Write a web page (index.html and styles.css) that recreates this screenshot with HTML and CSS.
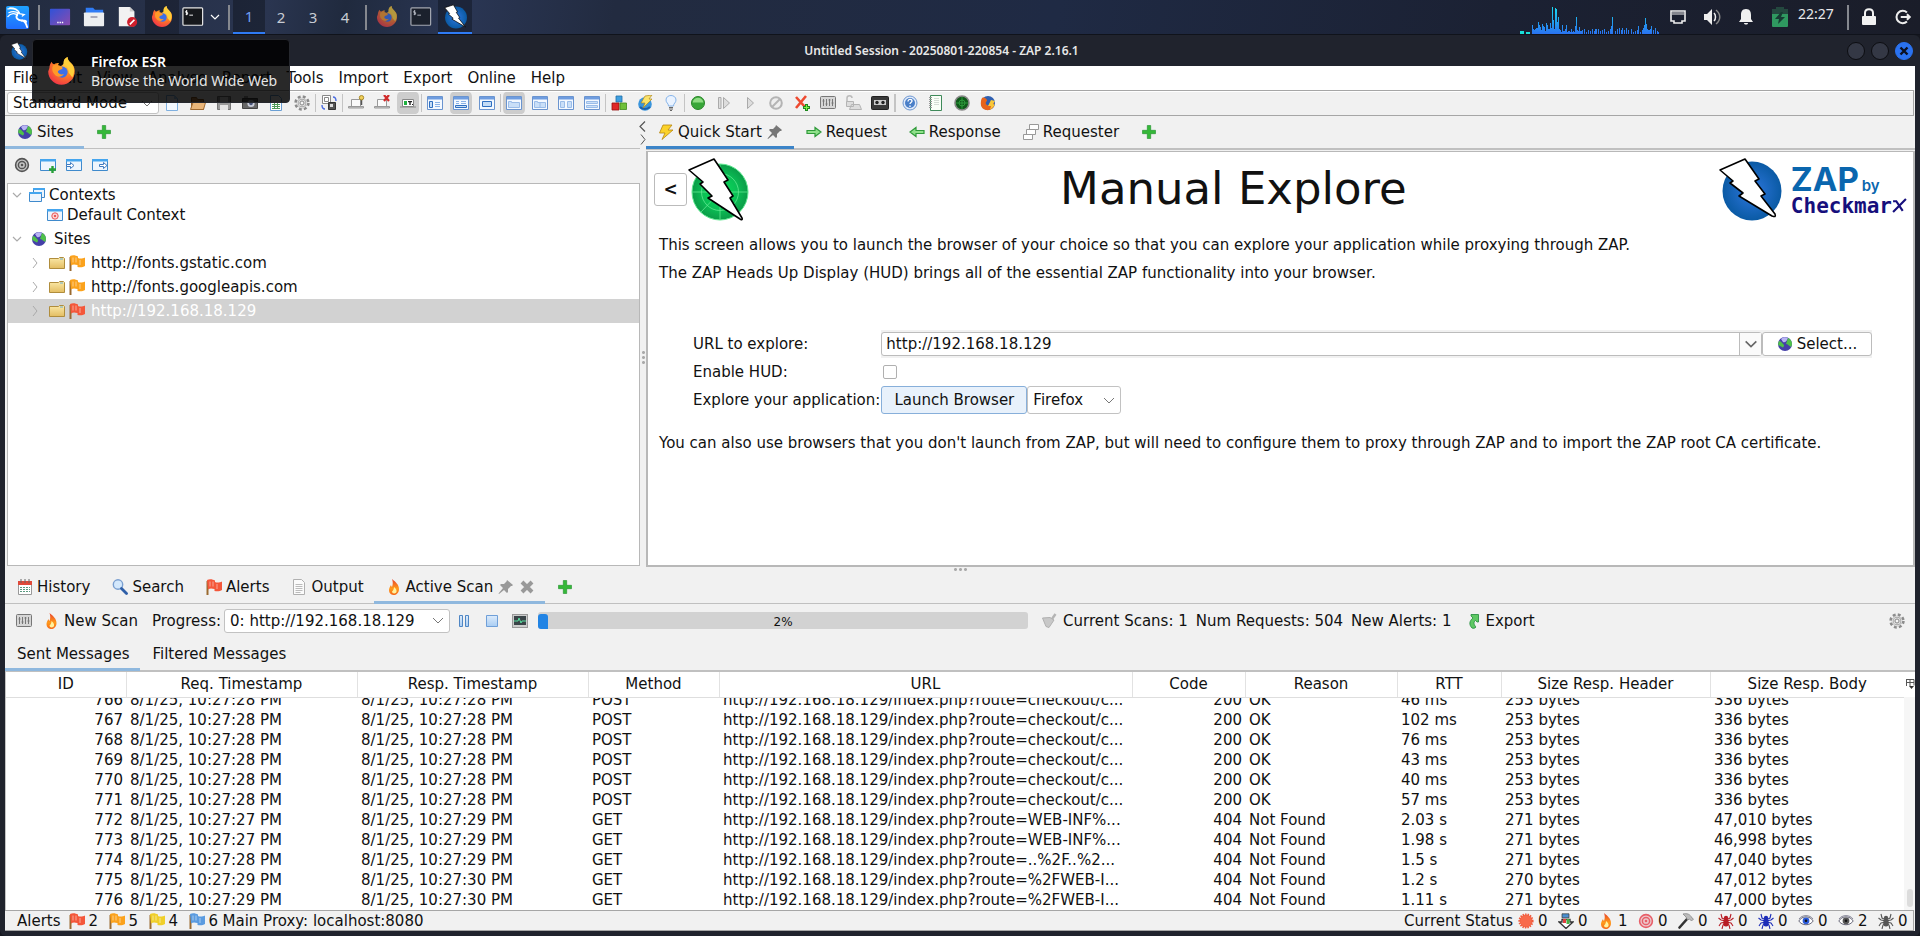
FILE: index.html
```html
<!DOCTYPE html>
<html lang="en">
<head>
<meta charset="utf-8">
<title>Untitled Session - 20250801-220854 - ZAP 2.16.1</title>
<link rel="stylesheet" href="styles.css">
</head>
<body>
<svg class="defs" aria-hidden="true">
  <defs>
    <radialGradient id="g-fox" cx="70%" cy="20%" r="90%"><stop offset="0" stop-color="#ffe14a"/><stop offset=".45" stop-color="#ff8a1f"/><stop offset="1" stop-color="#f0304a"/></radialGradient>
    <radialGradient id="g-blue"><stop offset="0" stop-color="#2f78e0"/><stop offset="1" stop-color="#0a5aa4"/></radialGradient>
    <radialGradient id="g-green"><stop offset="0" stop-color="#0ae05a"/><stop offset=".6" stop-color="#0ac055"/><stop offset="1" stop-color="#0b9c48"/></radialGradient>
    <linearGradient id="g-folder" x2="0" y2="1"><stop offset="0" stop-color="#fbe9a8"/><stop offset="1" stop-color="#e3bd62"/></linearGradient>
    <linearGradient id="g-flame" x2="0" y2="1"><stop offset="0" stop-color="#e8402a"/><stop offset=".6" stop-color="#ff9a1a"/><stop offset="1" stop-color="#f56a1c"/></linearGradient>
    <linearGradient id="g-desk" x2="1" y2="1"><stop offset="0" stop-color="#2f52d8"/><stop offset="1" stop-color="#8a4cae"/></linearGradient>
    <linearGradient id="g-lite" x2="0" y2="1"><stop offset="0" stop-color="#dcebfb"/><stop offset="1" stop-color="#a9cdf3"/></linearGradient>
    <linearGradient id="g-kali" x2="0" y2="1"><stop offset="0" stop-color="#1fa2ff"/><stop offset="1" stop-color="#1f6dff"/></linearGradient>
    <linearGradient id="g-graph" x1="0" y1="0" x2="0" y2="28" gradientUnits="userSpaceOnUse"><stop offset="0" stop-color="#18dcf0"/><stop offset="1" stop-color="#2a72f0"/></linearGradient>
  </defs>
  <symbol id="firefox" viewBox="0 0 24 24"><path fill="url(#g-fox)" d="M2 9c0-2 1-4 2-5 0 1 1 2 2 2 1-1 3-1 4-1-1 1-1 2 0 3 3-1 4-2 4-4 0-2 1-3 3-4 0 2 1 3 3 5 2 2 3 4 3 7 0 6-5 11-11 11S1 18 1 12z"/><path fill="#ffcf3a" d="M17 0c-2 1-4 3-3 6 2 1 4 3 4 7l3 4c3-6 1-10-2-12-1-1-2-3-2-5z"/><circle cx="12.500" cy="12.500" r="4.600" fill="#3d6fe8"/><path fill="#ff9a28" d="M5 7c3-1 7 0 8 2-1 2-3 1-4 3 0 2 3 3 5 2-2 3-6 3-8 0-2-2-2-5-1-7z"/></symbol>
  <symbol id="zap" viewBox="0 0 24 24"><circle cx="12.500" cy="13" r="10.500" fill="url(#g-blue)"/><path fill="#fff" stroke="#000" stroke-width=".7" stroke-linejoin="round" d="M1.500 3.500 10 .8l4 6.800-1.300.4 3.400 5-1.200.5 6.600 8.500L8.500 14.500l1.300-.8-4.600-4 1.100-.6z"/></symbol>
  <symbol id="term" viewBox="0 0 24 22"><rect x="1" y="1" width="21.500" height="19" rx="1" fill="#16181c" stroke="#e8e8e8" stroke-width="1.300"/><path d="M5.800 4.500H4.200v1.700h1.900v1.800H4M5 3.500v5.500M8 9h4" fill="none" stroke="#fff"/></symbol>
  <symbol id="kali" viewBox="0 0 26 26"><rect x="1" y="1" width="24" height="24" rx="2" fill="url(#g-kali)"/><path fill="none" stroke="#fff" stroke-width="1.300" stroke-linecap="round" d="M3 4c6-1 11 1 12 5M5 3c4 0 8 1 10 5M4 8c4-2 8-1 11 1l5 1-2 1.500M3 12c3-4 8-4 10-1"/><path fill="none" stroke="#fff" stroke-width="2" stroke-linecap="round" d="M13 9c-3 5 1 7 5 7 3 1 4 3 5 7M17 16.500c3-.5 5 0 5 1"/></symbol>
  <symbol id="files" viewBox="0 0 24 22"><path fill="#2f7bf5" d="M3 1h8l2 2h9v6H3z"/><rect x="1" y="6" width="22" height="15" rx="1" fill="#eceef0"/><rect x="8" y="10" width="8" height="2" rx="1" fill="#aab"/></symbol>
  <symbol id="editor" viewBox="0 0 22 24"><path fill="#f2f2f2" d="M1 1h12l5 5v16H1z"/><path fill="#c9c9c9" d="M13 1l5 5h-5z"/><circle cx="15.500" cy="17.500" r="5.500" fill="#cf1f2c"/><path d="m13 20 5-5" stroke="#fff" stroke-width="1.800"/></symbol>
  <symbol id="desk" viewBox="0 0 24 20"><rect x="1" y="1" width="22" height="18" rx="1" fill="url(#g-desk)"/><path d="M9 16h1.500M11.500 16H13M14 16h1.500" stroke="#fff" stroke-width="1.500"/></symbol>
  <symbol id="chev" viewBox="0 0 12 12"><path d="m2 4 4 4 4-4" fill="none" stroke="currentColor" stroke-width="1.200"/></symbol>
  <symbol id="chevr" viewBox="0 0 12 12"><path d="m4 1 4 5-4 5" fill="none" stroke="currentColor"/></symbol>
  <symbol id="chevl" viewBox="0 0 12 12"><path d="M8 1 3 6l5 5" fill="none" stroke="currentColor" stroke-width="1.200"/></symbol>
  <symbol id="net" viewBox="0 0 18 16"><path fill="none" stroke="#eee" stroke-width="1.600" d="M2 2h14v10h-3v2H5v-2H2z"/><path stroke="#eee" d="M4 3v3M6 3v3M8 3v3M10 3v3M12 3v3M14 3v3"/></symbol>
  <symbol id="vol" viewBox="0 0 18 18"><path fill="#eee" d="M1 6h3l5-5v16l-5-5H1z"/><path d="M11 5c2 2 2 6 0 8" fill="none" stroke="#eee" stroke-width="1.500"/><path d="M13 2c5 4 5 10 0 14" fill="none" stroke="#888" stroke-width="1.500"/></symbol>
  <symbol id="bell" viewBox="0 0 16 18"><path fill="#f0f0f0" d="M8 1c4 0 5 3 5 6v4l2 3H1l2-3V7c0-3 1-6 5-6zM6 15h4c0 2-4 2-4 0z"/></symbol>
  <symbol id="batt" viewBox="0 0 18 22"><path fill="#24483f" d="M5 1h8v2h4v6H1V3h4z"/><path fill="#2f9960" d="M1 8h16v12q0 1-1 1H2q-1 0-1-1z"/><path fill="#173b33" d="m10 6-6 7h4l-1 5 7-7h-4l2-5z"/></symbol>
  <symbol id="lock" viewBox="0 0 16 18"><path d="M4 8V5c0-5 8-5 8 0v3" fill="none" stroke="#f2f2f2" stroke-width="2"/><rect x="1" y="8" width="14" height="9" rx="1" fill="#f2f2f2"/></symbol>
  <symbol id="out" viewBox="0 0 16 16"><path d="M11.500 4a5.500 5.500 0 1 0 0 8M6 8h8M11.500 5.500 14 8l-2.500 2.500" fill="none" stroke="#eee" stroke-width="1.800"/></symbol>

  <symbol id="new" viewBox="0 0 16 16"><path fill="#f4f9ff" stroke="#7fb0e0" d="M2.500.5h8l3 3v12h-11z"/><path fill="#a9cdf3" d="M10 0v4h4z"/></symbol>
  <symbol id="open" viewBox="0 0 16 16"><path fill="#c98b4a" stroke="#8f5a24" d="M1.500 14.500v-12h5l1 2h6v10z"/><path fill="#eab679" stroke="#a06a30" d="M.5 14.500 3 7.500h12.500l-2 7z"/></symbol>
  <symbol id="save" viewBox="0 0 16 16"><path fill="#9a9a9a" stroke="#777" d="M1.500 1.500h13v13h-13z"/><path fill="#e4e4e4" d="M4 2h8v5H4zM4 10h8v5H4z"/></symbol>
  <symbol id="camera" viewBox="0 0 16 16"><path fill="#666" stroke="#444" d="M.5 3.500h15v10H.5z"/><circle cx="9" cy="8.500" r="3.600" fill="#c8ccd8"/><circle cx="9" cy="8.500" r="1.800" fill="#4a5578"/><path fill="#999" d="M2 1h4v2H2z"/></symbol>
  <symbol id="sheet" viewBox="0 0 16 16"><path fill="#fff" stroke="#6a9fd4" d="M2.500.5h8l3 3v12h-11z"/><path stroke="#4f9a5a" d="M4 7.500h8M4 9.500h8M4 11.500h8M4 13.500h8M6.500 7v7M9.500 7v7"/></symbol>
  <symbol id="gear" viewBox="0 0 16 16"><circle cx="8" cy="8" r="6.300" fill="none" stroke="#8c8c8c" stroke-width="2.800" stroke-dasharray="2.800 2.150"/><circle cx="8" cy="8" r="4.400" fill="#dedede" stroke="#8c8c8c" stroke-width="1.600"/><circle cx="8" cy="8" r="4.600" fill="none" stroke="#d8d8d8" stroke-width="1.200"/><circle cx="8" cy="8" r="2" fill="#f6f6f6" stroke="#888"/></symbol>
  <symbol id="swap" viewBox="0 0 16 16"><path fill="#fff" stroke="#888" d="M1.500.5h8v8h-8zM3.500 2.500h4v4h-4z"/><path fill="#555" stroke="#333" d="M7.500 7.500h7v7h-7z"/><path fill="#ddd" d="M9 9h3v3H9z"/><path d="M15 6c0-3-1-4-3-4M1 10c0 3 1 4 3 4" fill="none" stroke="#4a6ce0" stroke-width="1.400"/></symbol>
  <symbol id="lap" viewBox="0 0 16 16"><path fill="#fafafa" stroke="#999" d="M3.500 4.500h9v7h-9z"/><path fill="#ccc" stroke="#999" d="M.5 11.500h15v1.500H.5z"/></symbol>
  <symbol id="lapkey" viewBox="0 0 16 16"><use href="#lap"/><path d="M13.500 4v6" stroke="#555" stroke-width="1.500"/><circle cx="13.500" cy="2.700" r="2.200" fill="#f0cf5a" stroke="#a88a2a"/></symbol>
  <symbol id="lapx" viewBox="0 0 16 16"><use href="#lap"/><path d="m10 0 5 6m0-6-5 6" stroke="#d02a2a" stroke-width="2.200"/></symbol>
  <symbol id="lapt" viewBox="0 0 18 16"><path fill="#fff" stroke="#888" d="M3.500 4.500h11v7h-11z"/><path stroke="#888" d="M1 12h16"/><path fill="#20b040" d="M5 6h3v4H5z"/><path fill="#222" d="M9 6h4v1.200h-1.300V10h-1.400V7.200H9zM13 9h1v1h-1z"/></symbol>
  <symbol id="w0" viewBox="0 0 16 16"><path fill="#f4f9ff" stroke="#6a94cf" d="M.5 1.500h15v13H.5z"/><path fill="#6f9de0" d="M1 2h14v2.500H1z"/></symbol>
  <symbol id="w1" viewBox="0 0 16 16"><use href="#w0"/><path fill="#c4dcf6" stroke="#2f6fc0" d="M2.500 6.500h3v6h-3z"/><path d="M8 7.500h5M8 9.500h5M8 11.500h5" stroke="#8ab2e6"/></symbol>
  <symbol id="w2" viewBox="0 0 16 16"><use href="#w0"/><path d="M3 6.500h3M8 6.500h5M3 8.500h3M8 8.500h5" stroke="#8ab2e6"/><path fill="#c4dcf6" stroke="#2f6fc0" d="M2.500 10.500h11v2h-11z"/></symbol>
  <symbol id="w3" viewBox="0 0 16 16"><use href="#w0"/><path fill="#c4dcf6" stroke="#2f6fc0" d="M3.500 6.500h9v5h-9z"/></symbol>
  <symbol id="w4" viewBox="0 0 16 16"><use href="#w0"/><path fill="#c9dff8" stroke="#9abce8" d="M2.500 6.500h3v1h8v5h-11z"/></symbol>
  <symbol id="w5" viewBox="0 0 16 16"><use href="#w0"/><path fill="#c9dff8" stroke="#9abce8" d="M2.500 6.500h3v1h8v5h-11zM8 7.500v5"/></symbol>
  <symbol id="w6" viewBox="0 0 16 16"><use href="#w0"/><path fill="#c9dff8" stroke="#9abce8" d="M2.500 6.500h4v6h-4zM9.500 6.500h4v6h-4z"/></symbol>
  <symbol id="w7" viewBox="0 0 16 16"><use href="#w0"/><path fill="#c9dff8" stroke="#9abce8" d="M2.500 6.500h11v2h-11zM2.500 10.500h11v2h-11z"/></symbol>
  <symbol id="blocks" viewBox="0 0 16 16"><path fill="#3f9fe0" stroke="#1f6fa8" stroke-width=".8" d="M5 1h6v6H5z"/><path fill="#e02828" stroke="#981010" stroke-width=".8" d="M1 8h7v7H1z"/><path fill="#6fc03a" stroke="#3f8a1a" stroke-width=".8" d="M9 8h6.500v6.500H9z"/></symbol>
  <symbol id="update" viewBox="0 0 16 16"><circle cx="8" cy="9" r="6.800" fill="#3a95dc"/><path d="M3 12c2 2 6 3 10 0" stroke="#1f5fa8" stroke-width="2" fill="none"/><path fill="#fbe36a" stroke="#b08a20" stroke-width=".7" d="m8 1 7-1-3 4h3L6 13l2-5H4z"/></symbol>
  <symbol id="bulb" viewBox="0 0 16 16"><path fill="#eaf3ff" stroke="#86b4ea" d="M5.500 11c0-3-2.500-3-2.500-6 0-6 10-6 10 0 0 3-2.500 3-2.500 6z"/><path stroke="#666" d="M6 12.500h4M6 14h4M7 15.500h2"/></symbol>
  <symbol id="go" viewBox="0 0 16 16"><circle cx="8" cy="8" r="6.500" fill="#38a638" stroke="#2a862a"/><path fill="#8fdc84" d="M2.500 7.500C3.500 1 12.500 1 13.500 7.500z"/></symbol>
  <symbol id="step" viewBox="0 0 16 16"><path fill="#ddd" stroke="#aaa" d="M2.500 2.500h2.500v11H2.500zM7.500 2.500l6 5.500-6 5.500z"/></symbol>
  <symbol id="play" viewBox="0 0 16 16"><path fill="#ddd" stroke="#aaa" d="m5.500 2.500 6 5.500-6 5.500z"/></symbol>
  <symbol id="ban" viewBox="0 0 16 16"><circle cx="8" cy="8" r="5.800" fill="#eee" stroke="#b4b4b4" stroke-width="2"/><path d="m4 12 8-8" stroke="#b4b4b4" stroke-width="2"/></symbol>
  <symbol id="brk" viewBox="0 0 16 16"><path d="m2 2 9 10M12 1 2 13" stroke="#ee4a30" stroke-width="2.600"/><path d="M12.500 9v7M9 12.500h7" stroke="#1f8a1f" stroke-width="3"/><path d="M12.500 10v5M10 12.500h5" stroke="#7ff04a"/></symbol>
  <symbol id="mixer" viewBox="0 0 18 16"><rect x="1.500" y="1.500" width="15" height="12" rx="1" fill="#d6d6d6" stroke="#777"/><path d="M4.500 4v7M7.500 4v7M10.500 4v7M13.500 4v7M3.500 6h2M6.500 9h2M9.500 5h2M12.500 8h2" stroke="#777"/></symbol>
  <symbol id="unlock" viewBox="0 0 18 16"><path d="M2 7V3c0-3 5-3 5 0" fill="none" stroke="#bbb" stroke-width="1.500"/><path fill="#ddd" stroke="#b4b4b4" d="M1.500 6.500h7v5h-7zM6.500 9.500h8l2 5h-12z"/></symbol>
  <symbol id="tape" viewBox="0 0 18 16"><rect x=".5" y="1.500" width="17" height="13" rx="1" fill="#3a3a3a" stroke="#222"/><rect x="3" y="5" width="12" height="5" fill="#ccc"/><circle cx="6" cy="7.500" r="1.700" fill="#222"/><circle cx="12" cy="7.500" r="1.700" fill="#222"/></symbol>
  <symbol id="help" viewBox="0 0 16 16"><circle cx="8" cy="8" r="7" fill="#dfeafa" stroke="#6f97d0"/><circle cx="8" cy="8" r="5" fill="#4a7fc8"/><path d="M6 6.500c0-3 4-2.500 4-.5C10 7.500 8 7.500 8 9M8 10.500V12" fill="none" stroke="#fff" stroke-width="1.300"/></symbol>
  <symbol id="book" viewBox="0 0 16 16"><path fill="#fafff8" stroke="#3f8a5a" d="M2.500.5h11v15h-11z"/><path d="M1 2.500h3M1 4.500h3M1 6.500h3M1 8.500h3M1 10.500h3M1 12.500h3" stroke="#999"/><path d="M6 3.500h5M6 5.500h5M6 7.500h5M6 9.500h5" stroke="#d4dcd4"/></symbol>
  <symbol id="radar" viewBox="0 0 16 16"><circle cx="8" cy="8" r="7" fill="#0f5a1a" stroke="#888" stroke-width="1.600"/><circle cx="8" cy="8" r="3" fill="none" stroke="#38b048" stroke-width=".7"/><path d="M8 2v12M2 8h12" stroke="#38b048" stroke-width=".7"/></symbol>
  <symbol id="fox16" viewBox="0 0 16 16"><circle cx="8" cy="8" r="7" fill="#2f5fb0"/><path fill="#e8641c" d="M2 3c2-1 4 0 5 2 0 2-2 2-1 4 2 3 6 1 7-2 4 5-3 9-7 8C0 14 0 7 2 3z"/><path fill="#f8c83a" d="m11 5 4 1-2 3 2 1-5 5 1-4H8z"/></symbol>

  <symbol id="globe" viewBox="0 0 16 16"><circle cx="8" cy="8" r="7" fill="#4540a8"/><path fill="#b8b4f4" d="M4 3c2-2 5-2 7-1-1 3-3 5-5 4z"/><path fill="#4fc04a" d="M11 2c4 2 5 6 3 9-2-1-3-3-5-3zM2 5c2 0 3 2 5 4 0 2-1 3-2 2C3 10 1 9 1 8z"/></symbol>
  <symbol id="plus" viewBox="0 0 16 16"><path fill="#35b838" stroke="#1f8f2a" stroke-width=".6" d="M6.300 1.500h3.400v4.800h4.800v3.400H9.700v4.800H6.300V9.700H1.500V6.300h4.800z"/></symbol>
  <symbol id="bolt" viewBox="0 0 16 16"><path fill="#fbd22a" stroke="#b8860f" stroke-width=".8" d="M5 1h9l-4 5h5L4 15.500 7 9H1.500z"/></symbol>
  <symbol id="pin" viewBox="0 0 16 16"><path fill="currentColor" d="m9 1 6 5-1 1-1 0-3 3v3l-1 1-3-3-5 4-.5-.5L5 9 2 6l1-1h3l2.500-2.500z"/></symbol>
  <symbol id="arr" viewBox="0 0 16 16"><path fill="#8fe08a" stroke="#2f9a3a" stroke-width="1.200" d="M1 6.500h8V3.500L15 8l-6 4.500v-3H1z"/></symbol>
  <symbol id="arl" viewBox="0 0 16 16"><path fill="#8fe08a" stroke="#2f9a3a" stroke-width="1.200" d="M15 6.500H7V3.500L1 8l6 4.500v-3h8z"/></symbol>
  <symbol id="wins" viewBox="0 0 16 16"><g fill="#fff" stroke="#999"><path d="M6.500.5h9v5h-9z"/><path d="M3.500 5.500h9v5h-9z"/><path d="M.5 10.500h9v5h-9z"/></g></symbol>
  <symbol id="target" viewBox="0 0 16 16"><circle cx="8" cy="8" r="6.400" fill="#eee" stroke="currentColor" stroke-width="1.600"/><circle cx="8" cy="8" r="6.400" fill="currentColor" fill-opacity=".25"/><circle cx="8" cy="8" r="3.600" fill="none" stroke="currentColor" stroke-width="1.500"/><circle cx="8" cy="8" r="1.300" fill="currentColor"/></symbol>
  <symbol id="ctx" viewBox="0 0 16 16"><path fill="#eef5fd" stroke="#3f8acc" d="M.5 2.500h15v11H.5z"/><path fill="#45a5ee" d="M0 2h16v2.500H0z"/></symbol>
  <symbol id="ctxadd" viewBox="0 0 16 16"><use href="#ctx"/><path d="M12.500 9v7M9 12.500h7" stroke="#28a038" stroke-width="2.400"/></symbol>
  <symbol id="ctxin" viewBox="0 0 16 16"><use href="#ctx"/><path fill="#fff" stroke="#3f7ac0" d="M.5 7.500h4v-2L8 8.500l-3.500 3v-2h-4z"/></symbol>
  <symbol id="ctxout" viewBox="0 0 16 16"><use href="#ctx"/><path fill="#fff" stroke="#3f7ac0" d="M7.500 7.500h4v-2L15 8.500l-3.500 3v-2h-4z"/></symbol>
  <symbol id="ctxs" viewBox="0 0 16 16"><path fill="#eef5fd" stroke="#3f8acc" d="M4.500 1.500h11v9h-11z"/><path fill="#45a5ee" d="M4 1h12v2H4z"/><path fill="#eef5fd" stroke="#3f8acc" d="M.5 5.500h12v9H.5z"/><path fill="#45a5ee" d="M0 5h13v2H0z"/></symbol>
  <symbol id="ctxt" viewBox="0 0 16 16"><use href="#ctx"/><circle cx="8" cy="9" r="3.200" fill="#fbd0d0" stroke="#e85a5a"/><circle cx="8" cy="9" r="1" fill="#e03030"/></symbol>
  <symbol id="folder" viewBox="0 0 16 16"><path fill="url(#g-folder)" stroke="#b08d3c" d="M.5 3.500h9l1-1h4l1 1v10H.5z"/><path d="M11 4h3" stroke="#6ab0d8"/></symbol>
  <symbol id="flag" viewBox="0 0 16 16"><path d="M1.500 2v14" stroke="#9a6a30" stroke-width="2"/><path fill="currentColor" d="M1 1c3-1.500 6-.5 8 .5V3c2 1 5 .5 7-.5v8.500c-2 1.500-5 1.500-7.500 1L8.500 10C6 9.500 4 9 2 10.500z"/><path d="M4 2.500v5M7 2.500v5M11 5v5" stroke="#fff" stroke-opacity=".35" stroke-width="1.400"/></symbol>
  <symbol id="cal" viewBox="0 0 16 16"><path fill="#fff" stroke="#999" d="M1.500 3.500h13v12h-13z"/><path fill="#e04a3a" d="M1 2h14v4H1z"/><path d="M4 0v4M8 0v4M12 0v4" stroke="#666"/><path d="M3 8.500h10M3 10.500h10M3 12.500h10" stroke="#5a9a80" stroke-dasharray="2 1"/></symbol>
  <symbol id="mag" viewBox="0 0 16 16"><circle cx="6" cy="5.500" r="4.700" fill="#d3e8fc" stroke="#7a9fd0" stroke-width="1.400"/><path d="m9.500 9.500 5 5" stroke="#2f5fa8" stroke-width="2.800" stroke-linecap="round"/></symbol>
  <symbol id="page" viewBox="0 0 16 16"><path fill="#fbfbfb" stroke="#b0b0b0" d="M2.500.5h8l3 3v12h-11z"/><path d="M4.500 5.500h7M4.500 7.500h7M4.500 9.500h7M4.500 11.500h7M4.500 13.500h5" stroke="#bbb"/></symbol>
  <symbol id="flame" viewBox="0 0 12 16"><path fill="url(#g-flame)" d="M4 0c4 3 7 6 7 10 0 4-3 6-5 6s-5-1-5-5c0-2 1-3 2-5 0 1 1 2 1 2C5 5 5 3 4 0z"/><path fill="#fff3a0" d="M6 8c2 2 3 3 2.500 5S4 15 4 12.500C5 12 6 10 6 8z"/></symbol>
  <symbol id="close" viewBox="0 0 16 16"><path d="m3 3 10 10M13 3 3 13" stroke="#999" stroke-width="4"/></symbol>
  <symbol id="pause" viewBox="0 0 16 16"><path fill="url(#g-lite)" stroke="#4f86c4" d="M3.500 2.500h3v11h-3zM9.500 2.500h3v11h-3z"/></symbol>
  <symbol id="stop" viewBox="0 0 16 16"><path fill="url(#g-lite)" stroke="#6f9fd8" d="M2.500 2.500h11v11h-11z"/></symbol>
  <symbol id="mon" viewBox="0 0 18 16"><rect x="1.500" y="1.500" width="15" height="13" fill="#ccc" stroke="#999"/><path fill="#3a4448" d="M3 3h12v9H3z"/><path d="M3 8h4l1-3 2 5 1-2h4" fill="none" stroke="#58e0a0"/></symbol>
  <symbol id="broom" viewBox="0 0 16 16"><path fill="#c8c8c8" stroke="#b0b0b0" d="M1.500 5 9 4.500 13 7l-5 7.500-3-1z"/><path d="m11 6 3.500-5" stroke="#b4b4b4" stroke-width="2.400"/></symbol>
  <symbol id="export" viewBox="0 0 12 16"><path fill="#5fc864" stroke="#1f8a3a" stroke-width=".8" d="M4 15C1 12 1 8 5 5L3 3V1.500h7.500V9H9L7.500 7.500C5 9 6 12 8 14c-1 1.500-3 1.500-4 1z"/></symbol>
  <symbol id="cols" viewBox="0 0 10 12"><path d="M1 1.500h8v6M1.500 1v7M1 4.500h8M5 2v6" fill="none" stroke="#555"/><path fill="#333" d="M4 8h5l-2.500 3z"/></symbol>
  <symbol id="burst" viewBox="0 0 16 16"><circle cx="8" cy="8" r="6.400" fill="#f8694a"/><circle cx="8" cy="8" r="6.600" fill="none" stroke="#ef5a3c" stroke-width="2" stroke-dasharray="1.400 1.100"/></symbol>
  <symbol id="down" viewBox="0 0 16 16"><path fill="#fff" stroke="#333" stroke-width="1.300" d="M4 6.500h8V9h3l-7 6.500L1 9h3z"/><path fill="#4a8fd0" stroke="#333" stroke-width=".7" d="M4 .8h7v4H4z"/><path fill="#e04040" d="M5 6h3v4H5z"/><path fill="#48b048" d="M8.500 6h3v5h-3z"/></symbol>
  <symbol id="hammer" viewBox="0 0 16 16"><path d="m1.500 14.500 8-9" stroke="#333" stroke-width="2.600" stroke-linecap="round"/><path fill="#bbb" stroke="#888" stroke-width=".8" d="M5 1c4-1 7 0 9 4l1.500 1-2 2-2-2-2 1L8 4z"/></symbol>
  <symbol id="spider" viewBox="0 0 16 16"><g fill="none" stroke="currentColor" stroke-width="1.100"><path d="M8 7 4 5 3 1M8 7l4-2 1-4M8 8 3 7 .5 5M8 8l5-1 2.500-2M8 9l-5 1-2 3M8 9l5 1 2 3M8 10l-3 2-1 4M8 10l3 2 1 4"/></g><circle cx="8" cy="5" r="2.200" fill="currentColor"/><ellipse cx="8" cy="10" rx="2.800" ry="3.500" fill="currentColor"/></symbol>
  <symbol id="eye" viewBox="0 0 16 16"><path fill="#fff" stroke="#667" d="M.8 8C4 2.500 12 2.500 15.200 8 12 13 4 13 .8 8z"/><circle cx="8" cy="7.800" r="3.400" fill="currentColor"/><circle cx="8" cy="7.800" r="1.300" fill="#111"/><path d="M1 6C4 1.500 12 1.500 15 6" fill="none" stroke="#889"/></symbol>
</svg>

<header class="taskbar">
  <button class="tb" aria-label="Applications"><svg class="i24"><use href="#kali"/></svg></button>
  <span class="tsep"></span>
  <button class="tb" aria-label="Desktop"><svg class="i22"><use href="#desk"/></svg></button>
  <button class="tb" aria-label="Files"><svg class="i22"><use href="#files"/></svg></button>
  <button class="tb" aria-label="Text editor"><svg class="i22"><use href="#editor"/></svg></button>
  <button class="tb hot" aria-label="Firefox"><svg class="i22"><use href="#firefox"/></svg></button>
  <button class="tb narrow" aria-label="Terminal"><svg class="i22"><use href="#term"/></svg></button>
  <button class="tb drop" aria-label="More terminals"><svg class="i12"><use href="#chev"/></svg></button>
  <span class="tsep"></span>
  <button class="ws on">1</button><button class="ws">2</button><button class="ws">3</button><button class="ws">4</button>
  <span class="tsep"></span>
  <button class="tb dim" aria-label="Firefox window"><svg class="i22"><use href="#firefox"/></svg></button>
  <button class="tb dim" aria-label="Terminal window"><svg class="i22"><use href="#term"/></svg></button>
  <button class="tb on" aria-label="ZAP window"><svg class="i24"><use href="#zap"/></svg></button>
  <div class="tray">
    <svg class="graph" viewBox="0 0 140 28"><path fill="#18e0d8" d="M0 25h4v3H0zM6 26h4v2H6z"/><path fill="none" stroke="url(#g-graph)" d="M12.500 28v-9M13.500 28v-5M14.500 28v-4M15.500 28v-5M16.500 28v-6M17.500 28v-6M18.500 28v-12M19.500 28v-9M20.500 28v-7M21.500 28v-4M22.500 28v-10M23.500 28v-8M24.500 28v-7M25.500 28v-3M26.500 28v-11M27.500 28v-9M28.500 28v-5M29.500 28v-5M30.500 28v-11M31.500 28v-6M32.500 28V1M33.500 28v-14M34.500 28v-5M35.500 28V2M36.500 28V3M37.500 28v-12M38.500 28v-17M39.500 28v-5M40.500 28v-4M41.500 28v-2M42.500 28v-9M43.500 28v-3M44.500 28v-3M45.500 28v-5M46.500 28v-9M47.500 28v-2M48.500 28v-3M49.500 28v-3M50.500 28v-2M51.500 28v-5M52.500 28v-2M53.500 28v-3M54.500 28v-2M55.500 28v-8M56.500 28v-17M57.500 28v-4M58.500 28v-3M59.500 28v-7M60.500 28v-3M61.500 28v-3M62.500 28v-4M64.500 28v-5M66.500 28v-2M68.500 28v-4M70.500 28v-3M72.500 28v-5M74.500 28v-3M75.500 28v-5M76.500 28v-5M78.500 28v-5M80.500 28v-3M82.500 28v-4M84.500 28v-5M86.500 28v-2M88.500 28v-3M90.500 28v-5M91.500 28v-8M92.500 28v-17M95.500 28v-3M97.500 28v-5M99.500 28v-6M101.500 28v-4M102.500 28v-6M104.500 28v-4M106.500 28v-6M108.500 28v-4M111.500 28v-5M113.500 28v-2M115.500 28v-3M117.500 28v-4M118.500 28v-8M120.500 28v-2M122.500 28v-4M123.500 28v-6M124.500 28v-9M125.500 28v-16M126.500 28v-10M127.500 28v-5M128.500 28v-4M129.500 28v-4M130.500 28v-5M131.500 28v-8M133.500 28v-4M135.500 28v-6M137.500 28v-3M138.500 28v-2"/></svg>
    <button class="tb" aria-label="Network"><svg class="i18"><use href="#net"/></svg></button>
    <button class="tb" aria-label="Volume"><svg class="i18"><use href="#vol"/></svg></button>
    <button class="tb" aria-label="Notifications"><svg class="i18"><use href="#bell"/></svg></button>
    <button class="tb" aria-label="Battery"><svg class="i22"><use href="#batt"/></svg></button>
    <time>22:27</time>
    <span class="tsep"></span>
    <button class="tb" aria-label="Lock"><svg class="i18"><use href="#lock"/></svg></button>
    <button class="tb" aria-label="Log out"><svg class="i18"><use href="#out"/></svg></button>
  </div>
</header>

<aside class="tooltip" role="tooltip">
  <svg><use href="#firefox"/></svg>
  <div><strong>Firefox ESR</strong><br>Browse the World Wide Web</div>
</aside>

<div class="window">
  <div class="titlebar">
    <svg class="i18"><use href="#zap"/></svg>
    <h2>Untitled Session - 20250801-220854 - ZAP 2.16.1</h2>
    <div class="winbtns"><button aria-label="Minimize"></button><button aria-label="Maximize"></button><button class="x" aria-label="Close"><svg viewBox="0 0 16 16"><path d="m4.500 4.500 7 7m0-7-7 7" stroke="#0b1020" stroke-width="2.400"/></svg></button></div>
  </div>
  <div class="app">
    <nav class="menubar"><button>File</button><button>Edit</button><button>View</button><button>Analyse</button><button>Report</button><button>Tools</button><button>Import</button><button>Export</button><button>Online</button><button>Help</button></nav>

    <div class="toolbar">
      <select class="mode" aria-label="Mode"><option>Standard Mode</option></select>
      <button aria-label="New"><svg><use href="#new"/></svg></button><button aria-label="Open"><svg><use href="#open"/></svg></button><button aria-label="Save"><svg><use href="#save"/></svg></button><button aria-label="Snapshot"><svg><use href="#camera"/></svg></button><button aria-label="Properties"><svg><use href="#sheet"/></svg></button><button aria-label="Options"><svg><use href="#gear"/></svg></button>
      <i></i><button aria-label="Swap"><svg><use href="#swap"/></svg></button>
      <i></i><button aria-label="Auth"><svg><use href="#lapkey"/></svg></button><button aria-label="Disable"><svg><use href="#lapx"/></svg></button><button class="sel" aria-label="Show text"><svg><use href="#lapt"/></svg></button>
      <i></i><button aria-label="Layout left"><svg><use href="#w1"/></svg></button><button class="sel" aria-label="Layout bottom"><svg><use href="#w2"/></svg></button><button aria-label="Layout full"><svg><use href="#w3"/></svg></button>
      <i></i><button class="sel" aria-label="Tabs"><svg><use href="#w4"/></svg></button><button aria-label="Split tabs"><svg><use href="#w5"/></svg></button><button aria-label="Side by side"><svg><use href="#w6"/></svg></button><button aria-label="Stacked"><svg><use href="#w7"/></svg></button>
      <i></i><button aria-label="Add-ons"><svg><use href="#blocks"/></svg></button><button aria-label="Updates"><svg><use href="#update"/></svg></button><button aria-label="Hints"><svg><use href="#bulb"/></svg></button>
      <i></i><button aria-label="Break"><svg><use href="#go"/></svg></button><button aria-label="Step"><svg><use href="#step"/></svg></button><button aria-label="Continue"><svg><use href="#play"/></svg></button><button aria-label="Drop"><svg><use href="#ban"/></svg></button><button aria-label="Add break"><svg><use href="#brk"/></svg></button><button aria-label="Scan policy"><svg><use href="#mixer"/></svg></button><button aria-label="Unlock"><svg><use href="#unlock"/></svg></button><button aria-label="Record"><svg><use href="#tape"/></svg></button>
      <i class="wide"></i><button aria-label="Help"><svg><use href="#help"/></svg></button><button aria-label="Report"><svg><use href="#book"/></svg></button><button aria-label="HUD"><svg><use href="#radar"/></svg></button><button aria-label="Open browser"><svg><use href="#fox16"/></svg></button>
    </div>

    <main class="upper">
      <section class="left">
        <div class="tabs"><button class="tab on"><svg><use href="#globe"/></svg>Sites</button><button class="tab" aria-label="Add tab"><svg><use href="#plus"/></svg></button></div>
        <div class="sitebar"><button aria-label="Scope"><svg class="grey"><use href="#target"/></svg></button><button aria-label="New context"><svg><use href="#ctxadd"/></svg></button><button aria-label="Import context"><svg><use href="#ctxin"/></svg></button><button aria-label="Export context"><svg><use href="#ctxout"/></svg></button></div>
        <ul class="tree">
          <li class="short"><svg class="tw"><use href="#chev"/></svg><svg><use href="#ctxs"/></svg><span>Contexts</span></li>
          <li class="short leaf"><svg><use href="#ctxt"/></svg><span>Default Context</span></li>
          <li class="root"><svg class="tw"><use href="#chev"/></svg><svg><use href="#globe"/></svg><span>Sites</span></li>
          <li class="kid"><svg class="tw"><use href="#chevr"/></svg><svg><use href="#folder"/></svg><svg class="orange"><use href="#flag"/></svg><span>http://fonts.gstatic.com</span></li>
          <li class="kid"><svg class="tw"><use href="#chevr"/></svg><svg><use href="#folder"/></svg><svg class="orange"><use href="#flag"/></svg><span>http://fonts.googleapis.com</span></li>
          <li class="kid picked"><svg class="tw"><use href="#chevr"/></svg><svg><use href="#folder"/></svg><svg class="red"><use href="#flag"/></svg><span>http://192.168.18.129</span></li>
        </ul>
      </section>
      <div class="vsplit"><button aria-label="Collapse left"><svg><use href="#chevl"/></svg></button><button aria-label="Collapse right"><svg><use href="#chevr"/></svg></button><span class="grip"></span></div>
      <section class="right">
        <div class="tabs"><button class="tab on blue"><svg><use href="#bolt"/></svg>Quick Start<svg class="pin"><use href="#pin"/></svg></button><button class="tab"><svg><use href="#arr"/></svg>Request</button><button class="tab"><svg><use href="#arl"/></svg>Response</button><button class="tab"><svg><use href="#wins"/></svg>Requester</button><button class="tab" aria-label="Add tab"><svg><use href="#plus"/></svg></button></div>
        <div class="panel">
          <div class="hero">
            <button class="back">&lt;</button>
            <svg class="scope" viewBox="0 0 62 66"><circle cx="33" cy="36" r="28" fill="url(#g-green)" stroke="#5fe890"/><g fill="none" stroke="#5fe890" stroke-width=".8"><circle cx="33" cy="36" r="18.500"/><circle cx="33" cy="36" r="9"/><path d="M33 8v56M5 36h56M33 36 14 56"/></g><path fill="#fff" stroke="#000" stroke-width="1.600" stroke-linejoin="round" d="M2 14 27 3l14 21-4 2 9 14-3 2 12 20c1 2-1 2-2 1L21 42l4-2-12-12 3-2z"/></svg>
            <h1>Manual Explore</h1>
            <div class="brand">
              <svg viewBox="0 0 64 66"><circle cx="34" cy="35" r="29.500" fill="url(#g-blue)"/><path fill="#fff" stroke="#000" stroke-width="1.600" stroke-linejoin="round" d="M2 14 27 3l14 20-4 2 10 13-4 2 14 18c1 3 0 3-3 2L21 40l4-3-13-10 3-2z"/></svg>
              <div class="words"><div><b>ZAP</b><small>by</small></div><span>Checkmar<svg viewBox="0 0 14 14"><path d="M1 3h3l6 9M1 13 13 1" fill="none" stroke="#160f7c" stroke-width="2"/></svg></span></div>
            </div>
          </div>
          <p>This screen allows you to launch the browser of your choice so that you can explore your application while proxying through ZAP.</p>
          <p>The ZAP Heads Up Display (HUD) brings all of the essential ZAP functionality into your browser.</p>
          <form class="form">
            <label for="url">URL to explore:</label>
            <div class="band"><div class="combo"><input id="url" type="text" value="http://192.168.18.129"><button type="button" aria-label="History"><svg><use href="#chev"/></svg></button></div><button type="button" class="btn pick"><svg><use href="#globe"/></svg>Select...</button></div>
            <label for="hud">Enable HUD:</label>
            <div class="cell"><input id="hud" type="checkbox"></div>
            <label for="br">Explore your application:</label>
            <div class="cell"><button type="button" class="btn launch">Launch Browser</button><select id="br" class="browser"><option>Firefox</option></select></div>
          </form>
          <p>You can also use browsers that you don't launch from ZAP, but will need to configure them to proxy through ZAP and to import the ZAP root CA certificate.</p>
        </div>
      </section>
    </main>

    <div class="hsplit"><span class="grip"></span></div>

    <section class="lower">
      <div class="tabs"><button class="tab"><svg><use href="#cal"/></svg>History</button><button class="tab"><svg><use href="#mag"/></svg>Search</button><button class="tab"><svg class="red"><use href="#flag"/></svg>Alerts</button><button class="tab"><svg><use href="#page"/></svg>Output</button><button class="tab on"><svg><use href="#flame"/></svg>Active Scan<svg class="pin pale"><use href="#pin"/></svg><svg><use href="#close"/></svg></button><button class="tab" aria-label="Add tab"><svg><use href="#plus"/></svg></button></div>
      <div class="scanbar">
        <button class="opt" aria-label="Scan policy manager"><svg><use href="#mixer"/></svg></button>
        <button class="news"><svg><use href="#flame"/></svg>New Scan</button>
        <label for="scan">Progress:</label>
        <select id="scan" class="scan"><option>0: http://192.168.18.129</option></select>
        <button class="ctl" aria-label="Pause"><svg><use href="#pause"/></svg></button><button class="ctl" aria-label="Stop"><svg><use href="#stop"/></svg></button><button class="ctl" aria-label="Scan progress"><svg class="i18"><use href="#mon"/></svg></button>
        <div class="progress" role="progressbar" aria-valuenow="2" aria-valuemin="0" aria-valuemax="100"><span style="width:2%"></span><em>2%</em></div>
        <button class="ctl" aria-label="Clear"><svg><use href="#broom"/></svg></button>
        <span class="stat">Current Scans: 1</span><span class="stat">Num Requests: 504</span><span class="stat">New Alerts: 1</span>
        <button class="exp"><svg><use href="#export"/></svg>Export</button>
        <button class="cog" aria-label="Options"><svg><use href="#gear"/></svg></button>
      </div>
      <div class="tabs sub"><button class="tab on">Sent Messages</button><button class="tab">Filtered Messages</button></div>
      <div class="grid">
        <div class="tables">
          <table class="head">
            <colgroup><col class="c1"><col class="c2"><col class="c2"><col class="c4"><col class="c5"><col class="c6"><col class="c7"><col class="c8"><col class="c9"><col class="c10"></colgroup>
            <thead><tr><th>ID</th><th>Req. Timestamp</th><th>Resp. Timestamp</th><th>Method</th><th>URL</th><th>Code</th><th>Reason</th><th>RTT</th><th>Size Resp. Header</th><th>Size Resp. Body</th></tr></thead>
          </table>
          <div class="rows">
            <table>
              <colgroup><col class="c1"><col class="c2"><col class="c2"><col class="c4"><col class="c5"><col class="c6"><col class="c7"><col class="c8"><col class="c9"><col class="c10"></colgroup>
              <tbody>
              <tr><td>766</td><td>8/1/25, 10:27:28 PM</td><td>8/1/25, 10:27:28 PM</td><td>POST</td><td>http://192.168.18.129/index.php?route=checkout/c...</td><td>200</td><td>OK</td><td>46 ms</td><td>253 bytes</td><td>336 bytes</td></tr>
              <tr><td>767</td><td>8/1/25, 10:27:28 PM</td><td>8/1/25, 10:27:28 PM</td><td>POST</td><td>http://192.168.18.129/index.php?route=checkout/c...</td><td>200</td><td>OK</td><td>102 ms</td><td>253 bytes</td><td>336 bytes</td></tr>
              <tr><td>768</td><td>8/1/25, 10:27:28 PM</td><td>8/1/25, 10:27:28 PM</td><td>POST</td><td>http://192.168.18.129/index.php?route=checkout/c...</td><td>200</td><td>OK</td><td>76 ms</td><td>253 bytes</td><td>336 bytes</td></tr>
              <tr><td>769</td><td>8/1/25, 10:27:28 PM</td><td>8/1/25, 10:27:28 PM</td><td>POST</td><td>http://192.168.18.129/index.php?route=checkout/c...</td><td>200</td><td>OK</td><td>43 ms</td><td>253 bytes</td><td>336 bytes</td></tr>
              <tr><td>770</td><td>8/1/25, 10:27:28 PM</td><td>8/1/25, 10:27:28 PM</td><td>POST</td><td>http://192.168.18.129/index.php?route=checkout/c...</td><td>200</td><td>OK</td><td>40 ms</td><td>253 bytes</td><td>336 bytes</td></tr>
              <tr><td>771</td><td>8/1/25, 10:27:28 PM</td><td>8/1/25, 10:27:28 PM</td><td>POST</td><td>http://192.168.18.129/index.php?route=checkout/c...</td><td>200</td><td>OK</td><td>57 ms</td><td>253 bytes</td><td>336 bytes</td></tr>
              <tr><td>772</td><td>8/1/25, 10:27:27 PM</td><td>8/1/25, 10:27:29 PM</td><td>GET</td><td>http://192.168.18.129/index.php?route=WEB-INF%...</td><td>404</td><td>Not Found</td><td>2.03 s</td><td>271 bytes</td><td>47,010 bytes</td></tr>
              <tr><td>773</td><td>8/1/25, 10:27:27 PM</td><td>8/1/25, 10:27:29 PM</td><td>GET</td><td>http://192.168.18.129/index.php?route=WEB-INF%...</td><td>404</td><td>Not Found</td><td>1.98 s</td><td>271 bytes</td><td>46,998 bytes</td></tr>
              <tr><td>774</td><td>8/1/25, 10:27:28 PM</td><td>8/1/25, 10:27:29 PM</td><td>GET</td><td>http://192.168.18.129/index.php?route=..%2F..%2...</td><td>404</td><td>Not Found</td><td>1.5 s</td><td>271 bytes</td><td>47,040 bytes</td></tr>
              <tr><td>775</td><td>8/1/25, 10:27:29 PM</td><td>8/1/25, 10:27:30 PM</td><td>GET</td><td>http://192.168.18.129/index.php?route=%2FWEB-I...</td><td>404</td><td>Not Found</td><td>1.2 s</td><td>270 bytes</td><td>47,012 bytes</td></tr>
              <tr><td>776</td><td>8/1/25, 10:27:29 PM</td><td>8/1/25, 10:27:30 PM</td><td>GET</td><td>http://192.168.18.129/index.php?route=%2FWEB-I...</td><td>404</td><td>Not Found</td><td>1.11 s</td><td>271 bytes</td><td>47,000 bytes</td></tr>
              </tbody>
            </table>
          </div>
        </div>
        <div class="scroll"><svg><use href="#cols"/></svg><span></span></div>
      </div>
    </section>

    <footer class="status">
      <span class="lead">Alerts</span>
      <span class="st"><svg class="red"><use href="#flag"/></svg>2</span><span class="st"><svg class="orange"><use href="#flag"/></svg>5</span><span class="st"><svg class="yellow"><use href="#flag"/></svg>4</span><span class="st six"><svg class="azure"><use href="#flag"/></svg>6</span>
      <span class="proxy">Main Proxy: localhost:8080</span>
      <span class="cur">Current Status</span>
      <span class="st"><svg><use href="#burst"/></svg>0</span><span class="st"><svg><use href="#down"/></svg>0</span><span class="st"><svg><use href="#flame"/></svg>1</span><span class="st"><svg class="rose"><use href="#target"/></svg>0</span><span class="st"><svg><use href="#hammer"/></svg>0</span><span class="st"><svg class="crimson"><use href="#spider"/></svg>0</span><span class="st"><svg class="navy"><use href="#spider"/></svg>0</span><span class="st"><svg class="iris"><use href="#eye"/></svg>0</span><span class="st"><svg class="grey"><use href="#eye"/></svg>2</span><span class="st"><svg class="grey"><use href="#spider"/></svg>0</span>
    </footer>
  </div>
</div>
</body>
</html>
```
FILE: styles.css
```css
* { box-sizing: border-box; }
body {
  margin: 0; height: 100vh; display: flex; flex-direction: column; overflow: hidden;
  background: #15171f; color: #111;
  font: 15px/20px "DejaVu Sans", sans-serif;
}
button, input, select { font: inherit; color: inherit; margin: 0; }
button { border: 0; background: none; padding: 0; display: flex; align-items: center; justify-content: center; white-space: nowrap; }
svg { display: block; flex: none; width: 16px; height: 16px; }
.defs { position: absolute; width: 0; height: 0; }
p, h1, h2, ul { margin: 0; padding: 0; font-weight: normal; }
.i12 { width: 12px; height: 12px; }
.i18 { width: 18px; height: 18px; }
.i22 { width: 22px; height: 22px; }
.i24 { width: 25px; height: 25px; }
.red { color: #f4573a; } .orange { color: #fba21c; } .yellow { color: #f0cf2a; } .azure { color: #5b9be0; }
.rose { color: #e8606a; } .crimson { color: #b81c24; } .navy { color: #1c2cb8; } .iris { color: #2a5ad8; } .grey { color: #555; }

.taskbar {
  flex: none; height: 35px; display: flex; align-items: stretch;
  background: linear-gradient(100deg, #222b3f 0, #2a3550 14%, #202a3e 18%, #2a3654 24%, #222b40 32%, #1f2a44 55%, #1b2133 78%, #1a1d29 100%);
  border-bottom: 1px solid #10131b; color: #e8e8ea; font: 15px/34px "Noto Sans", sans-serif;
}
.tb { width: 34px; }
.tb.narrow { width: 27px; } .tb.drop { width: 18px; color: #fff; }
.tb.hot { background: rgba(0,0,0,.25); }
.tb.dim svg { opacity: .65; }
.tb.on, .ws.on { background: rgba(0,0,0,.3); border-bottom: 2px solid #2f7bf5; }
.tsep { width: 9px; display: flex; align-items: center; justify-content: center; }
.tsep::after { content: ""; width: 2px; height: 25px; background: #85888f; }
.ws { width: 32px; color: #c8ccd4; }
.ws.on { color: #6f9df0; }
.tray { margin-left: auto; display: flex; }
.graph { width: 142px; height: 28px; align-self: flex-end; }
.tray time { width: 46px; padding-left: 1px; font-size: 14px; line-height: 28px; }

.tooltip {
  position: absolute; left: 32px; top: 39px; height: 64px; z-index: 2;
  display: flex; align-items: center; gap: 15px; padding: 0 12px 0 14px;
  background: rgba(0,0,0,.84); border: 1px solid #26282e; border-radius: 4px;
  color: #e6e6e6; font: 14px/19px "Noto Sans", sans-serif;
}
.tooltip svg { width: 29px; height: 29px; }
.tooltip strong { color: #fff; font-weight: 600; }

.window { flex: 1; min-height: 0; display: flex; flex-direction: column; padding: 0 5px 5px; background: #20232d; border-radius: 6px; }
.titlebar { flex: none; height: 31px; display: grid; grid-template-columns: 1fr auto 1fr; align-items: center; padding: 0 2px 0 5px; color: #e8e8e8; }
.titlebar h2 { font: 600 12px/20px "Noto Sans", sans-serif; margin-right: 40px; }
.winbtns { justify-self: end; display: flex; gap: 6px; }
.winbtns button { width: 18px; height: 18px; border-radius: 9px; background: #343845; border: 1px solid #0c0d11; }
.winbtns .x { background: #2a72f0; border-color: #2a72f0; }

.app { flex: 1; min-height: 0; display: flex; flex-direction: column; background: #f1f1f1; }
.menubar { flex: none; height: 24px; display: flex; gap: 15px; padding: 0 8px; background: #fff; }
.toolbar { flex: none; height: 26px; margin-right: 1px; display: flex; align-items: stretch; border: 1px solid #a6a6a6; border-left: 0; box-shadow: inset 0 1px #fff; padding: 1px 0; }
.toolbar button { width: 26px; border: solid transparent; border-width: 0 2px; background-clip: padding-box; border-radius: 5px; }
.toolbar svg { width: 18px; height: 16px; }
.toolbar .sel { background-color: #cdcdcd; }
.toolbar i { width: 1px; margin: 2px 0; background: #c4c4c4; }
.toolbar i.wide { width: 2px; margin: 2px 1px; }
select {
  appearance: none; border: 1px solid #c2c2c2; border-radius: 3px; padding: 0 5px; line-height: 20px;
  background-color: #fff;
  background-image: linear-gradient(45deg, transparent 45%, #777 45%, #777 58%, transparent 58%), linear-gradient(-45deg, transparent 45%, #777 45%, #777 58%, transparent 58%);
  background-size: 5px 5px; background-repeat: no-repeat;
  background-position: right 11px center, right 6px center;
}
.mode { width: 152px; margin: 0 0 0 2px; }

.upper { flex: none; height: 451px; display: flex; }
.left { width: 635px; flex: 0 1 635px; display: flex; flex-direction: column; }
.tabs { flex: none; height: 33px; display: flex; border-bottom: 1px solid #c0c0c0; }
.tab { gap: 4px; padding: 0 10px 0 12px; margin-bottom: -1px; border-bottom: 3px solid transparent; border-top: 2px solid transparent; }
.tab.on { border-bottom-color: #8fb8de; }
.tab.blue { border-bottom-color: #3c84c8; }
.pin { color: #777; width: 18px; } .pin.pale { color: #999; }
.sitebar { flex: none; height: 34px; display: flex; align-items: center; gap: 10px; padding: 0 0 2px 9px; }
.tree { flex: 1; list-style: none; background: #fff; border: 1px solid #b8b8b8; margin: 0 0 1px 2px; padding-top: 1px; }
.tree li { height: 24px; display: flex; align-items: center; gap: 4px; padding-left: 3px; }
.tree li.short { height: 20px; }
.tree li.root { margin-top: 2px; }
.tree li.root span { margin-left: 3px; }
.tree .tw { width: 12px; height: 12px; margin-right: 2px; color: #aaa; }
.tree .root .tw, .tree .kid .tw { margin-right: 4px; }
.tree .leaf { padding-left: 39px; }
.tree .kid { padding-left: 21px; }
.tree .kid span { margin-left: 2px; }
.tree .picked { background: #d2d2d2; color: #fff; }
.vsplit { flex: none; width: 6px; display: flex; flex-direction: column; align-items: center; padding-top: 4px; color: #555; }
.vsplit svg { width: 12px; height: 13px; }
.vsplit .grip { margin: auto 0; }
.grip { display: block; width: 3px; height: 14px; background: radial-gradient(circle, #aaa 1px, transparent 2px) 0 0 / 3px 5px; }
.right { flex: 1; min-width: 0; display: flex; flex-direction: column; }
.right .tabs { border-bottom-width: 2px; height: 34px; }
.panel { flex: 1; min-height: 0; overflow: hidden; background: #fff; border: 2px solid #b8b8b8; border-top-width: 1px; margin-top: 1px; }
.hero { height: 79px; display: flex; align-items: center; padding: 0 6px 5px 6px; }
.hero h1 { flex: 1; text-align: center; font-size: 45px; line-height: 60px; }
.back { width: 33px; height: 33px; border: 1px solid #bbb; border-radius: 3px; font-weight: bold; font-size: 17px; }
.scope { width: 62px; height: 66px; }
.brand { display: flex; align-items: center; gap: 9px; }
.brand > svg { width: 64px; height: 66px; }
.words { font-family: Inter, sans-serif; color: #0a66ae; }
.words b { font-size: 33px; line-height: 32px; font-weight: 700; }
.words small { font-size: 15px; font-weight: 600; margin-left: 3px; }
.words span { display: flex; align-items: center; color: #160f7c; font: bold 21px/20px "DejaVu Sans Mono", monospace; }
.words span svg { width: 15px; height: 15px; }
.panel p { padding-left: 11px; line-height: 28px; white-space: nowrap; }
.form { display: grid; grid-template-columns: auto 1fr; grid-auto-rows: 28px; align-items: center; column-gap: 1px; padding: 43px 41px 15px 45px; }
.band { display: flex; height: 28px; padding: 2px 0; background: #f1f1f1; }
.combo { flex: 1; display: flex; border: 1px solid #bcbcbc; border-radius: 3px; background: #fff; }
.combo input { flex: 1; min-width: 0; border: 0; background: none; padding: 0 4px; outline: 0; }
.combo button { width: 22px; border-left: 1px solid #bcbcbc; color: #666; background: #fafafa; }
.btn { border: 1px solid #bcbcbc; border-radius: 3px; background: #fff; gap: 4px; }
.pick { width: 110px; }
.cell { display: flex; align-items: center; }
.cell input { appearance: none; width: 14px; height: 14px; margin-left: 2px; border: 1px solid #b0b0b0; border-radius: 2px; background: #fff; }
.launch { width: 146px; height: 28px; border-color: #87afda; background: #e8f1fb; }
.browser { width: 94px; height: 28px; }

.hsplit { flex: none; height: 4px; display: flex; justify-content: center; align-items: center; }
.hsplit .grip { width: 15px; height: 3px; background-size: 5px 3px; }
.lower { flex: 1; min-height: 0; display: flex; flex-direction: column; }
.scanbar { flex: none; height: 33px; display: flex; align-items: center; padding: 0 10px; }
.scanbar .opt { margin-right: 12px; } .scanbar .opt svg { width: 18px; }
.news { gap: 6px; margin-right: 14px; }
.news svg { width: 13px; }
.scan { width: 226px; height: 24px; margin: 0 0 0 3px; }
.ctl { width: 28px; }
.progress { width: 490px; height: 17px; margin: 0 7px 0 4px; background: #d2d2d2; border-radius: 3px; overflow: hidden; display: grid; align-items: center; }
.progress span { grid-area: 1 / 1; height: 17px; background: #2284e4; border-radius: 3px; }
.progress em { grid-area: 1 / 1; text-align: center; font-style: normal; font-size: 12px; }
.stat { margin-right: 8px; white-space: nowrap; }
.exp { gap: 4px; margin-left: 8px; }
.exp svg { width: 14px; }
.cog { margin-left: auto; }
.lower > .tabs.sub { height: 35px; border-bottom-width: 2px; }
.sub .tab { padding: 0 11px 0 12px; }
.grid { flex: 1; min-height: 0; display: flex; background: #fff; border-left: 1px solid #c4c4c4; }
.tables { flex: 1; min-width: 0; display: flex; flex-direction: column; }
.rows { flex: 1; min-height: 0; overflow: hidden; display: flex; flex-direction: column; justify-content: flex-end; }
table { width: 100%; table-layout: fixed; border-collapse: collapse; }
.c1 { width: 120px; } .c2 { width: 231px; } .c4 { width: 131px; } .c5 { width: 413px; } .c6 { width: 113px; }
.c7 { width: 152px; } .c8 { width: 104px; } .c9 { width: 209px; } .c10 { width: 194px; }
th { height: 25px; padding: 0; font-weight: normal; border-bottom: 1px solid #dedede; border-right: 1px solid #e2e2e2; }
th:last-child { border-right: 0; }
td { height: 20px; line-height: 20px; padding: 0 3px 0 4px; white-space: nowrap; overflow: hidden; }
td:nth-child(1), td:nth-child(6) { text-align: right; }
.scroll { width: 11px; display: flex; flex-direction: column; justify-content: space-between; align-items: center; background: linear-gradient(#fff 25px, #f6f6f6 25px); padding: 6px 0 3px; }
.scroll svg { width: 10px; height: 12px; }
.scroll span { width: 6px; height: 18px; border-radius: 3px; background: #dcdcdc; }
.status { flex: none; height: 21px; display: flex; align-items: center; border: 1px solid #a6a6a6; border-left: 0; padding: 0 6px 0 12px; margin-right: 1px; }
.st { width: 40px; display: flex; align-items: center; gap: 4px; }
.st.six { width: 34px; }
.lead { margin-right: 8px; }
.cur { margin-left: auto; margin-right: 5px; }
.st:last-child { width: 29px; }
```
